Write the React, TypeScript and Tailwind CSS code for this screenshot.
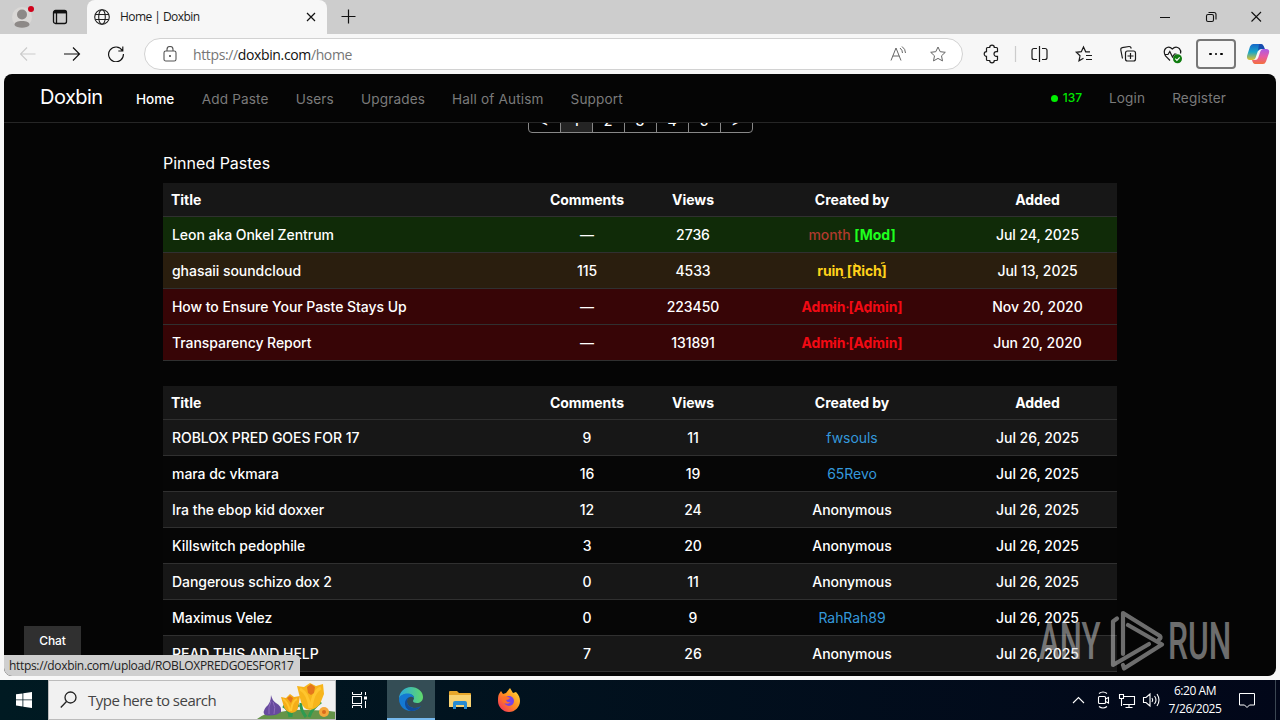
import type { ReactNode } from "react";

interface Paste {
  title: string;
  comments: string;
  views: string;
  author: ReactNode;
  added: string;
  row: string;
}

function Sparkles({ color }: { color: string }) {
  return (
    <svg className="absolute inset-0 h-full w-full" viewBox="0 0 102 18" fill={color}>
      <circle cx="37" cy="5" r="1" />
      <circle cx="46" cy="10" r="1.2" />
      <circle cx="67" cy="15" r="1" />
      <circle cx="75" cy="4" r="1" />
      <circle cx="81" cy="15" r="1" />
      <circle cx="31" cy="10" r="0.9" />
    </svg>
  );
}

const admin = (
  <span className="relative font-bold tracking-[-0.12px] text-[#f20a14]">
    Admin [Admin]
    <Sparkles color="#f20a14" />
  </span>
);

const rich = (
  <span className="relative font-bold tracking-[-0.15px] text-[#ffd21a]">
    ruin [Rich]
    <svg className="absolute inset-0 h-full w-full" viewBox="0 0 70 18" stroke="#ffd21a" strokeWidth="1.200" fill="none">
      <path d="M25 16q2 1.800 4.500 0M38 1.500l2.500 2.500M66 1.500l4-1M63 13.500l4 1.500" />
    </svg>
  </span>
);

const pinned: Paste[] = [
  {
    title: "Leon aka Onkel Zentrum",
    comments: "—",
    views: "2736",
    author: (
      <span>
        <span className="text-[#b03a2e]">month</span>{" "}
        <span className="font-bold text-[#1eff1e]">[Mod]</span>
      </span>
    ),
    added: "Jul 24, 2025",
    row: "bg-[#102b08]",
  },
  { title: "ghasaii soundcloud", comments: "115", views: "4533", author: rich, added: "Jul 13, 2025", row: "bg-[#2a1e0e]" },
  { title: "How to Ensure Your Paste Stays Up", comments: "—", views: "223450", author: admin, added: "Nov 20, 2020", row: "bg-[#370506]" },
  { title: "Transparency Report", comments: "—", views: "131891", author: admin, added: "Jun 20, 2020", row: "bg-[#370506]" },
];

const user = (name: string) => <span className="font-normal text-[#3498db]">{name}</span>;

const pastes: Paste[] = [
  { title: "ROBLOX PRED GOES FOR 17", comments: "9", views: "11", author: user("fwsouls"), added: "Jul 26, 2025", row: "bg-[#171717]" },
  { title: "mara dc vkmara", comments: "16", views: "19", author: user("65Revo"), added: "Jul 26, 2025", row: "bg-[#060606]" },
  { title: "Ira the ebop kid doxxer", comments: "12", views: "24", author: "Anonymous", added: "Jul 26, 2025", row: "bg-[#171717]" },
  { title: "Killswitch pedophile", comments: "3", views: "20", author: "Anonymous", added: "Jul 26, 2025", row: "bg-[#060606]" },
  { title: "Dangerous schizo dox 2", comments: "0", views: "11", author: "Anonymous", added: "Jul 26, 2025", row: "bg-[#171717]" },
  { title: "Maximus Velez", comments: "0", views: "9", author: user("RahRah89"), added: "Jul 26, 2025", row: "bg-[#060606]" },
  { title: "READ THIS AND HELP", comments: "7", views: "26", author: "Anonymous", added: "Jul 26, 2025", row: "bg-[#171717]" },
];

const links = ["Add Paste", "Users", "Upgrades", "Hall of Autism", "Support"];

function PasteTable({ rows, head, cell }: { rows: Paste[]; head: string; cell: string }) {
  return (
    <table className="w-[954px] table-fixed border-collapse text-center text-[14px] leading-5 tracking-[-0.05px] text-white">
      <colgroup>
        <col className="w-[371px]" />
        <col className="w-[106px]" />
        <col className="w-[106px]" />
        <col className="w-[212px]" />
        <col className="w-[159px]" />
      </colgroup>
      <thead>
        <tr className={`border-b border-[#303030] bg-[#171717] font-semibold ${head}`}>
          <th className="pl-2 pt-px text-left">Title</th>
          <th className="pt-px">Comments</th>
          <th className="pt-px">Views</th>
          <th className="pt-px">Created by</th>
          <th className="pt-px">Added</th>
        </tr>
      </thead>
      <tbody>
        {rows.map((p) => (
          <tr key={p.title} className={`h-9 border-b border-[#303030] font-medium ${p.row}`}>
            <td className={`pl-[9px] text-left ${cell}`}>{p.title}</td>
            <td className={cell}>{p.comments}</td>
            <td className={cell}>{p.views}</td>
            <td className={cell}>{p.author}</td>
            <td className={cell}>{p.added}</td>
          </tr>
        ))}
      </tbody>
    </table>
  );
}

function TabStrip() {
  return (
    <div className="flex h-[34px] bg-[#cdcdcd]">
      <div className="flex w-[87px] items-center">
        <svg className="ml-3 h-[26px] w-6" viewBox="0 0 24 26">
          <circle cx="10" cy="13" r="10" fill="#dad8d6" />
          <circle cx="10" cy="10.500" r="5" fill="#8d8987" />
          <path d="M2.500 21c0-3 3-4 7.500-4s7.500 1 7.500 4c-2 3.500-13 3.500-15 0z" fill="#8d8987" />
          <circle cx="19" cy="5" r="3" fill="#d0021b" />
        </svg>
        <svg className="ml-4 h-4 w-4" viewBox="0 0 16 16" fill="none" stroke="#111" strokeWidth="1.3">
          <rect x="1.500" y="1.500" width="13" height="13" rx="2" />
          <path d="M1.500 3.500h13M4.500 4v10.500" strokeWidth="1.300" />
          <path d="M2 3h12" strokeWidth="2.500" />
        </svg>
      </div>
      <div className="flex w-[240px] items-center rounded-t-lg bg-[#f7f7f7] pl-[7px]">
        <svg className="h-4 w-4" viewBox="0 0 16 16" fill="none" stroke="#222" strokeWidth="1.100">
          <circle cx="8" cy="8" r="7.300" />
          <ellipse cx="8" cy="8" rx="3.300" ry="7.300" />
          <path d="M1.300 5.500h13.400M1.300 10.500h13.400" />
        </svg>
        <span className="ml-[10px] flex-1 text-[12px] tracking-[-0.55px] text-[#1b1b1b]">Home | Doxbin</span>
        <svg className="mr-[11px] h-[10px] w-[10px]" viewBox="0 0 10 10" stroke="#111" strokeWidth="1.200">
          <path d="M1 1l8 8M9 1l-8 8" />
        </svg>
      </div>
      <svg className="ml-[14px] mt-[9px] h-[15px] w-[15px]" viewBox="0 0 15 15" stroke="#111" strokeWidth="1.200">
        <path d="M.5 7.500h14M7.500.5v14" />
      </svg>
      <div className="flex flex-1 items-center justify-end pr-[18px]">
        <svg className="h-[12px] w-[102px]" viewBox="0 0 102 12" fill="none" stroke="#111" strokeWidth="1.100">
          <path d="M0 6.500h10M91.500 1l9.500 9.500M101 1l-9.500 9.500" />
          <rect x="46.500" y="3.500" width="7" height="7" rx="1.500" />
          <path d="M48.500 1.500h5.500q2 0 2 2v5" />
        </svg>
      </div>
    </div>
  );
}

function Toolbar() {
  return (
    <div className="flex h-10 items-center bg-[#f7f7f7]">
      <svg className="ml-5 h-4 w-[105px]" viewBox="0 0 105 16" fill="none" strokeWidth="1.150">
        <path d="M15.500 8h-15M7 1.500L.5 8 7 14.500" stroke="#cbcbcb" />
        <path d="M44 8h15.500M53 1.500L59.500 8 53 14.500" stroke="#111" />
        <path d="M102.300 4.500A7.400 7.400 0 1 0 103.400 8M102.800.5v4.500h-4.500" stroke="#111" />
      </svg>
      <div className="ml-[19px] flex h-8 w-[819px] items-center rounded-full border border-[#d2d2d2] bg-white pl-[18px] pr-4">
        <svg className="h-4 w-[14px]" viewBox="0 0 14 16" fill="none" stroke="#555" strokeWidth="1.100">
          <rect x="1" y="5" width="12" height="10" rx="1.800" />
          <path d="M4 5V3.500a3 3 0 0 1 6 0V5" />
          <circle cx="7" cy="10" r=".5" fill="#333" />
        </svg>
        <span className="ml-4 flex-1 text-[14px] tracking-[-0.37px] text-[#767676]">
          https://<span className="text-[#111]">doxbin.com</span>/home
        </span>
        <svg className="h-4 w-[56px]" viewBox="0 0 56 16" fill="none" stroke="#666">
          <path d="M1 14.500L6 2l5 12.500M2.800 10h6.400M10 2q2.500 2 2.500 5M12 .5q3.500 2.500 3.500 6.500" />
          <path d="M48 1l2.200 4.700 5.100.6-3.800 3.500 1 5.100L48 12.400l-4.500 2.500 1-5.100-3.800-3.500 5.100-.6z" />
        </svg>
      </div>
      <svg className="ml-5 h-5 w-[208px]" viewBox="983 44 208 20" fill="none" stroke="#1b1b1b" strokeWidth="1.200">
        <path d="M986.500 48.500q0-1 1-1h2.200a2.300 2.300 0 0 1 4.600 0h2.200q1 0 1 1v3.200h-1.200a2.300 2.300 0 0 0 0 4.600h1.200v3.200q0 1-1 1h-2.200a2.300 2.300 0 0 1-4.600 0h-2.200q-1 0-1-1v-3.200a2.300 2.300 0 0 1 0-4.600z" />
        <path d="M1015.500 46v16" stroke="#ccc" />
        <path d="M1037 48.500h-3q-2 0-2 2v7q0 2 2 2h3M1042 48.500h3q2 0 2 2v7q0 2-2 2h-3M1039.500 46v16" />
        <path d="M1090 51.800h-4.300L1083.500 47l-2.200 4.700-5 .6 3.700 3.500-1 5 4.500-2.500M1086 55.500h6M1086 59.500h6" />
        <rect x="1125.500" y="51" width="10" height="10" rx="2" />
        <path d="M1130.500 53v6M1127.500 56h6M1122.500 58.500l-1.700-8.500q-.4-1.800 1.400-2.300l6.800-1.200q1.800-.2 2.300 2" />
        <path d="M1170 60.500l-4.500-4.500q-2.500-4.500 0-7.500 3.500-3 6.800.5 3.400-3.500 7-.5 2 2 1.200 5M1164.500 54.500h3.500l1.800-3 2.700 5.500 2-3h2" />
        <circle cx="1177.500" cy="58.700" r="4.500" fill="#107c10" stroke="none" />
        <path d="M1175.300 58.700l1.600 1.600 2.800-3" stroke="#fff" />
      </svg>
      <div className="ml-[5px] flex h-[30px] w-10 items-center justify-center gap-[3px] rounded border-2 border-[#777]">
        <i className="h-[2.5px] w-[2.5px] rounded-full bg-black" />
        <i className="h-[2.5px] w-[2.5px] rounded-full bg-black" />
        <i className="h-[2.5px] w-[2.5px] rounded-full bg-black" />
      </div>
      <svg className="ml-[10px] h-[22px] w-6" viewBox="0 0 24 22">
        <defs>
          <linearGradient id="ca" x2="0" y2="1">
            <stop stopColor="#1767c9" />
            <stop offset=".5" stopColor="#18a6c9" />
            <stop offset="1" stopColor="#e2c22d" />
          </linearGradient>
          <linearGradient id="cb" x2="0" y2="1">
            <stop stopColor="#a95be6" />
            <stop offset=".5" stopColor="#e65aa5" />
            <stop offset="1" stopColor="#f4703d" />
          </linearGradient>
        </defs>
        <path d="M7 1h8q2 0 3 3l.7 2H15q-2.500 0-3.300 2.500L9.500 15q-.7 2-3 2H4q-3.500 0-3-4L4 3.500Q5 1 7 1z" fill="url(#ca)" />
        <path d="M17 21H9q-2 0-3-4h3q2.500 0 3.300-2.500L14.500 8q.7-2 3-2H20q4 0 3 4l-3 8.500q-1 2.500-3 2.500z" fill="url(#cb)" />
        <path d="M13 1h2q2 0 3 3l.7 2H15q-2 0-3 2z" fill="#184caf" />
      </svg>
    </div>
  );
}

function Watermark() {
  return (
    <div className="absolute left-[1035px] top-[535px] h-[62px] w-[194px] opacity-50">
      <svg className="absolute left-[70px] top-0 h-[62px] w-[56px]" viewBox="0 0 56 62" fill="none" stroke="#d5d5d5" strokeWidth="4.200" strokeLinejoin="round" strokeLinecap="round">
        <path d="M8 9.500l-4 3V56l36-21" />
        <path d="M14 45V4L51 27q1.500 2-1 3.500" />
        <path d="M19 16l34 19.500L15 59.500l-1-3.500" />
      </svg>
      <span className="absolute left-0 top-[8px] origin-left scale-x-[0.6] font-['Roboto'] text-[52px] font-medium leading-[50px] text-[#d5d5d5]">ANY</span>
      <span className="absolute left-[129px] top-[8px] origin-left scale-x-[0.61] font-['Roboto'] text-[52px] font-medium leading-[50px] text-[#d5d5d5]">RUN</span>
    </div>
  );
}

function Page() {
  return (
    <div className="relative mx-1 h-[602px] overflow-hidden rounded-lg bg-[#050505] font-['Inter',sans-serif]">
      <nav className="flex h-[49px] items-center border-b border-[#262626] pl-9 pt-[2px] text-[13.6px] tracking-[0.15px] text-[#7b7b7b]">
        <span className="w-[96px] pb-[4px] text-[20px] tracking-[-0.55px] text-white">Doxbin</span>
        <span className="mr-[27.5px] font-medium tracking-[-0.05px] text-white">Home</span>
        <div className="flex flex-1 gap-[27px]">
          {links.map((l) => (
            <span key={l}>{l}</span>
          ))}
        </div>
        <div className="flex items-center pb-[1px] pr-[50px]">
          <i className="mr-[5px] h-[7px] w-[7px] rounded-full bg-[#00f000]" />
          <span className="mr-[27px] text-[12px] font-medium tracking-[-0.1px] text-[#00e600]">137</span>
          <span className="mr-[27px]">Login</span>
          <span>Register</span>
        </div>
      </nav>
      <div className="mx-auto w-[954px]">
        <div className="flex h-[10px] items-end justify-center overflow-hidden">
          <div className="flex h-[30px] overflow-hidden rounded border border-[#888] text-[14px] font-medium leading-[14px] text-white">
            {["<", "1", "2", "3", "4", "5", ">"].map((n) => (
              <span
                key={n}
                className={`w-8 border-r border-[#888] pt-[10px] text-center last:w-[31px] last:border-r-0 ${n === "1" ? "bg-[#242424]" : ""}`}
              >
                {n}
              </span>
            ))}
          </div>
        </div>
        <h2 className="pb-[8px] pt-[18px] text-[16px] leading-6 text-white">Pinned Pastes</h2>
        <PasteTable rows={pinned} head="h-[33px]" cell="pt-[2px]" />
        <div className="h-[25px]" />
        <PasteTable rows={pastes} head="h-[34px]" cell="pt-0" />
      </div>
      <div className="absolute left-5 top-[552px] h-[30px] w-[57px] bg-[#303030] text-center text-[12px] font-medium leading-[30px] tracking-[-0.1px] text-white">Chat</div>
      <Watermark />
      <div className="absolute bottom-0 left-0 h-[21px] w-[296px] rounded-tr bg-[#cfcfcf] pl-[5px] font-['Open_Sans',sans-serif] text-[12px] leading-[21px] tracking-[-0.33px] text-[#222]">
        https://doxbin.com/upload/ROBLOXPREDGOESFOR17
      </div>
    </div>
  );
}

function Flowers() {
  return (
    <svg className="h-full w-[80px] translate-x-[2px]" viewBox="0 0 80 38">
      <path d="M0 38q10-8 23-7 14-3 28-2 17 0 29 2v7z" fill="#659449" />
      <path d="M33 36q-1-8-7-11M34 36q0-8 8-12M49 36q-6-8-5-14M52 36q3-9 12-15" stroke="#2f9b50" strokeWidth="3" fill="none" />
      <path d="M14 14q1 5 5 8 6 3 5 9-6 5-16 3-3-3 1-8 5-4 5-12z" fill="#674a9e" />
      <path d="M14 20q-3 6-2 13M16 21q3 5 1 12" stroke="#8d6bbb" fill="none" />
      <path d="M24 16l5 1 4-4 4 3 6-1-2 12q-1 4-6 5-6-1-8-6z" fill="#f5ad18" />
      <path d="M26 18q5 3 7 12M40 18q-5 2-6 12" stroke="#ffc52e" strokeWidth="2" fill="none" />
      <path d="M40 5l7 1 6-4 6 3 7-2 1 10-4 10q-4 5-10 6-7-1-9-8z" fill="#f7b51c" />
      <path d="M43 8q8 4 10 19M64 7q-8 3-10 20" stroke="#ffc52e" strokeWidth="3" fill="none" />
      <path d="M50 6l4-3 4 3-1 6-3 2-3-2zM30 17l3-2 3 2-2 5z" fill="#e4761c" />
      <circle cx="67" cy="31" r="5" fill="#f4a73b" />
      <circle cx="67" cy="31" r="2" fill="#d86b1c" />
    </svg>
  );
}

function Taskbar() {
  return (
    <div className="flex h-10 items-center bg-linear-to-r from-[#001a22] to-[#020719] text-white">
      <svg className="mx-4 h-4 w-4" viewBox="0 0 16 16" fill="#fff">
        <path d="M0 2.300l6.500-.9v6.100H0zM7.300 1.300L16 0v7.500H7.300zM0 8.300h6.500v6.200L0 13.600zM7.300 8.300H16V16l-8.700-1.300z" />
      </svg>
      <div className="flex h-10 w-[288px] items-center overflow-hidden border border-[#bcbcbc] bg-[#f1f1f1] pl-[11px]">
        <svg className="h-[18px] w-[18px]" viewBox="0 0 18 18" fill="none" stroke="#222" strokeWidth="1.300">
          <circle cx="10.500" cy="6.500" r="5.500" />
          <path d="M6.500 10.500L.8 16.500" />
        </svg>
        <span className="ml-[10px] flex-1 whitespace-nowrap text-[15px] tracking-[-0.52px] text-[#444]">Type here to search</span>
        <Flowers />
      </div>
      <svg className="ml-4 h-4 w-4" viewBox="0 0 16 16" fill="none" stroke="#fff">
        <path d="M.5 0v2.500h9V0M.5 16v-2.500h9V16M13.500 0v3M13.500 9v7" />
        <rect x=".5" y="4.500" width="9" height="7" />
        <rect x="12.500" y="5" width="2" height="2" fill="#fff" />
      </svg>
      <div className="ml-[19px] flex h-10 w-12 items-center justify-center border-b-2 border-[#76b9ed] bg-[#344d55]">
        <svg className="h-6 w-6" viewBox="0 0 24 24">
          <defs>
            <linearGradient id="ea" x2="1">
              <stop stopColor="#2aa8df" />
              <stop offset="1" stopColor="#60d96a" />
            </linearGradient>
          </defs>
          <path d="M0 12C0 5 5.500 0 12 0s12 4.500 12 10c0 4-3 6-6 6-2.500 0-4-1-4-2 0-.8 1-1.300 1-3 0-2-2-4-6-4-4.500 0-8 2-9 5z" fill="url(#ea)" />
          <path d="M0 12c0-3 4-5.500 8.500-5.500 3.500 0 6.500 2 6.500 4.500-1-1-2-1.300-3-1.300C9 10 8 12 8 14.500c0 4 4 6.500 8 6.500 2.500 0 4.500-1 6-2-2 3-6 5-10 5C5 24 0 18.500 0 12z" fill="#1479d3" />
          <path d="M12 9.700c-2.500.3-4 2.500-4 4.800 0 4 4 6.500 8 6.500 2.500 0 4.500-1 6-2-2 3-6 5-10 5-4-1-6-4-6-7.500 0-4 3-6.500 6-6.800z" fill="#124b98" />
        </svg>
      </div>
      <svg className="ml-[14px] h-[18px] w-[22px]" viewBox="0 0 22 18">
        <path d="M0 1q0-1 1-1h7l2 2h11q1 0 1 1v13H0z" fill="#e7a72c" />
        <path d="M0 4h22v12H0z" fill="#f8d272" />
        <path d="M4 18v-6q0-2 2-2h10q2 0 2 2v6h-3v-4H7v4z" fill="#278bd2" />
      </svg>
      <svg className="ml-[26px] h-6 w-6" viewBox="0 0 24 24">
        <defs>
          <linearGradient id="ff" x1="1" y2="1" x2="0">
            <stop stopColor="#ffe43b" />
            <stop offset=".5" stopColor="#ff8b20" />
            <stop offset="1" stopColor="#f32365" />
          </linearGradient>
        </defs>
        <path d="M2 6l2-3 2 3 3-1 4-5 3 5 3-1c3 3 4 6 4 9 0 6-5 11-11 11S1 19 1 13c0-3 0-5 1-7z" fill="url(#ff)" />
        <circle cx="12" cy="13" r="5" fill="#7543e6" />
        <path d="M5 9q4-2 8 1-1 2-4 2 1 3 5 2-3 3-7 1-3-2-2-6z" fill="#ff702b" />
      </svg>
      <svg className="ml-auto h-[18px] w-[90px]" viewBox="1072 691 90 18" fill="none" stroke="#fff" strokeWidth="1.100">
        <path d="M1073 703l5.500-5.500 5.500 5.500" />
        <rect x="1098.500" y="696.500" width="7" height="7" rx="1" />
        <path d="M1105.500 699l3-1.500v5.500l-3-1.500M1099 693.500q4-3 8 0M1099 706.500q4 3 8 0" />
        <path d="M1124 696.500h10.500v8H1123M1129 704.500v3M1125.500 707.500h7M1119.500 694.500h4v4h-4zM1121.500 698.500v7.500" />
        <path d="M1143.500 697.500h2.500l4-3.500v12l-4-3.500h-2.500zM1152 698q1.500 2 0 4M1154.500 696q3 4 0 8M1157 694q4 6 0 12" />
      </svg>
      <div className="ml-[1px] w-[64px] text-center text-[12px] leading-[18px] tracking-[-0.45px]">
        <div>6:20 AM</div>
        <div>7/26/2025</div>
      </div>
      <svg className="ml-[12px] mr-[20px] h-4 w-4" viewBox="0 0 16 16" fill="none" stroke="#fff">
        <path d="M.5 1.500h15v11.500h-5L8 15.500 5.500 13h-5z" />
      </svg>
      <div className="mr-1 h-10 w-px bg-[#3b4652]" />
    </div>
  );
}

function App() {
  return (
    <div className="h-[720px] w-[1280px] overflow-hidden bg-[#f7f7f7] font-['Open_Sans',sans-serif]">
      <TabStrip />
      <Toolbar />
      <Page />
      <div className="h-1" />
      <Taskbar />
    </div>
  );
}

export default App;
